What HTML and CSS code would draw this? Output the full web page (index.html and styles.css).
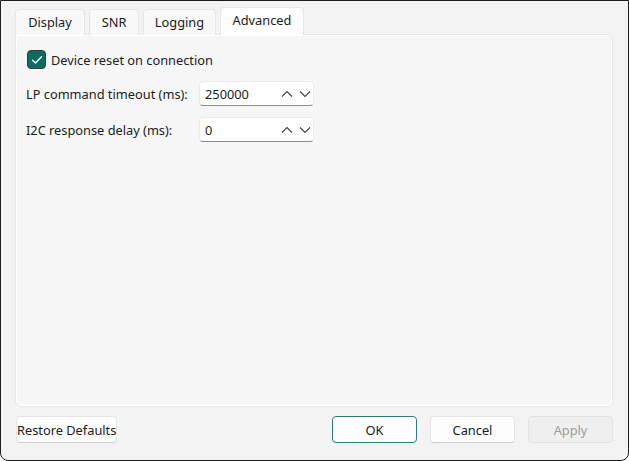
FILE: index.html
```html
<!DOCTYPE html>
<html>
<head>
<meta charset="utf-8">
<link rel="stylesheet" href="styles.css">
</head>
<body>
<div class="window">
  <div class="tabs">
    <div class="tab t-display">Display</div>
    <div class="tab t-snr">SNR</div>
    <div class="tab t-logging">Logging</div>
    <div class="tab active t-adv">Advanced</div>
  </div>
  <div class="panel">
    <label class="check-row">
      <span class="checkbox">
        <svg width="12" height="10" viewBox="0 0 12 10"><path d="M1.5 5.2 L4.5 8 L10.5 1.8" fill="none" stroke="#fff" stroke-width="1.3" stroke-linecap="round" stroke-linejoin="round"/></svg>
      </span>
      <span>Device reset on connection</span>
    </label>
    <div class="form">
      <div class="label">LP command timeout (ms):</div>
      <div class="spin">
        <span class="value">250000</span>
        <span class="arrows">
          <svg width="12" height="8" viewBox="0 0 12 8"><path d="M1 6.5 L6 1.5 L11 6.5" fill="none" stroke="#404040" stroke-width="1.1"/></svg>
          <svg width="12" height="8" viewBox="0 0 12 8"><path d="M1 1.5 L6 6.5 L11 1.5" fill="none" stroke="#404040" stroke-width="1.1"/></svg>
        </span>
      </div>
      <div class="label">I2C response delay (ms):</div>
      <div class="spin">
        <span class="value">0</span>
        <span class="arrows">
          <svg width="12" height="8" viewBox="0 0 12 8"><path d="M1 6.5 L6 1.5 L11 6.5" fill="none" stroke="#404040" stroke-width="1.1"/></svg>
          <svg width="12" height="8" viewBox="0 0 12 8"><path d="M1 1.5 L6 6.5 L11 1.5" fill="none" stroke="#404040" stroke-width="1.1"/></svg>
        </span>
      </div>
    </div>
  </div>
  <div class="footer">
    <button class="btn restore">Restore Defaults</button>
    <div class="spacer"></div>
    <button class="btn ok">OK</button>
    <button class="btn">Cancel</button>
    <button class="btn disabled">Apply</button>
  </div>
</div>
</body>
</html>
```
FILE: styles.css
```css
* { box-sizing: border-box; }
html, body { margin: 0; padding: 0; background: #ffffff; }
body {
  font-family: "Noto Sans", "Open Sans", sans-serif;
  font-size: 12.8px;
  color: #1b1b1b;
}
.window {
  width: 629px;
  height: 461px;
  background: #f3f3f3;
  border: 1px solid #1c1c1c;
  border-radius: 0 0 8px 8px;
  display: flex;
  flex-direction: column;
  padding: 7px 15px 0 14px;
}
.tabs {
  display: flex;
  gap: 4px;
  height: 27px;
  align-items: flex-end;
  position: relative;
  z-index: 1;
}
.tab {
  height: 26px;
  background: #f8f8f8;
  border: 1px solid #e6e6e6;
  border-bottom: none;
  border-radius: 4px 4px 0 0;
  display: flex;
  align-items: center;
  justify-content: center;
  line-height: 1;
}
.t-display { width: 70px; }
.t-snr { width: 50px; }
.t-logging { width: 73px; }
.t-adv { width: 84px; }
.tab.active {
  height: 28px;
  background: #fefefe;
  padding-bottom: 3px;
}
.panel {
  height: 373px;
  background: #f6f6f6;
  border: 1px solid #e7e7e7;
  border-radius: 0 6px 6px 6px;
  box-shadow: 1px 1px 0 #ffffff inset, -1px -1px 0 #ffffff inset;
  padding: 14px 0 0 10px;
  margin-top: -1px;
}
.check-row {
  display: flex;
  align-items: center;
  gap: 5px;
  height: 21px;
}
.checkbox {
  width: 19px;
  height: 19px;
  border-radius: 4px;
  background: #0f6b5f;
  border: 1px solid #3a3a3a;
  display: flex;
  align-items: center;
  justify-content: center;
  margin-left: 1px;
}
.form {
  display: grid;
  grid-template-columns: 173px 115px;
  row-gap: 11px;
  margin-top: 11px;
  align-items: center;
}
.spin {
  height: 25px;
  background: #ffffff;
  border: 1px solid #ececec;
  border-bottom: 1px solid #8a8a8a;
  border-radius: 4px;
  display: flex;
  align-items: center;
  padding: 0 0 0 5px;
}
.spin .value { flex: 1; padding-top: 1px; }
.spin .arrows { display: flex; gap: 6px; padding-right: 2px; }
.footer {
  display: flex;
  align-items: center;
  gap: 13px;
  padding: 9px 0 0 1px;
}
.spacer { flex: 1; }
.btn {
  font-family: "Noto Sans", "Open Sans", sans-serif;
  font-size: 12.8px;
  color: #1b1b1b;
  height: 27px;
  width: 85px;
  background: #fdfdfd;
  border: 1px solid #e4e4e4;
  border-bottom-color: #cfcfcf;
  border-radius: 4px;
  padding: 0;
  white-space: nowrap;
}
.btn.restore { width: 101px; }
.btn.ok { border: 1px solid #2e7d72; }
.btn.disabled { background: #efefef; color: #9c9c9c; border-color: #e2e2e2; }
```
